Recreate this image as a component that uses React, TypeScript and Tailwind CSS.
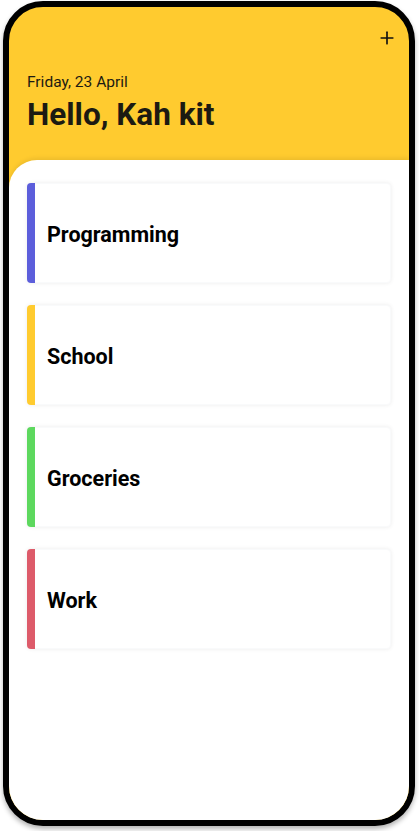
import { Plus } from 'lucide-react';

const lists = [
  { name: 'Programming', color: 'bg-[#5C5EDB]' },
  { name: 'School', color: 'bg-[#FFCB2F]' },
  { name: 'Groceries', color: 'bg-[#5DD85E]' },
  { name: 'Work', color: 'bg-[#DD5B6A]' },
];

export default function App() {
  return (
    <div className="w-[419px] h-[831px] bg-white pl-[3px] pt-[1px]" style={{ fontFamily: 'Roboto, "Noto Sans", sans-serif' }}>
      <div className="w-[412px] h-[825px] border-[6px] border-black rounded-[40px] overflow-hidden bg-[#FFCB2F] flex flex-col shadow-[0_3px_5px_rgba(0,0,0,0.3)]">
        <div className="h-[153px] shrink-0 flex flex-col px-[18px]">
          <div className="flex justify-end pt-[21px] -mr-[6px]">
            <Plus className="w-[20px] h-[20px] text-[#111]" strokeWidth={2} />
          </div>
          <p className="mt-[24px] text-[15.5px] leading-5 text-[#1c1a12]">Friday, 23 April</p>
          <h1 className="mt-[5px] text-[31.5px] leading-9 font-bold text-[#1c1a12]">Hello, Kah kit</h1>
        </div>
        <div className="flex-1 bg-white rounded-tl-[28px] shadow-[0_-2px_4px_rgba(0,0,0,0.08)] px-[18px] pt-[23px] flex flex-col gap-[22px]">
          {lists.map((l) => (
            <div key={l.name} className="h-[100px] flex rounded-[4px] bg-white shadow-[0_0_4px_rgba(0,0,0,0.08)] border border-gray-50">
              <div className={`w-2 ${l.color} rounded-l-[4px] -my-px -ml-px`} />
              <div className="flex-1 flex items-center pl-[12px] pt-[5px]">
                <span className="text-[21.5px] font-bold text-black">{l.name}</span>
              </div>
            </div>
          ))}
        </div>
      </div>
    </div>
  );
}
